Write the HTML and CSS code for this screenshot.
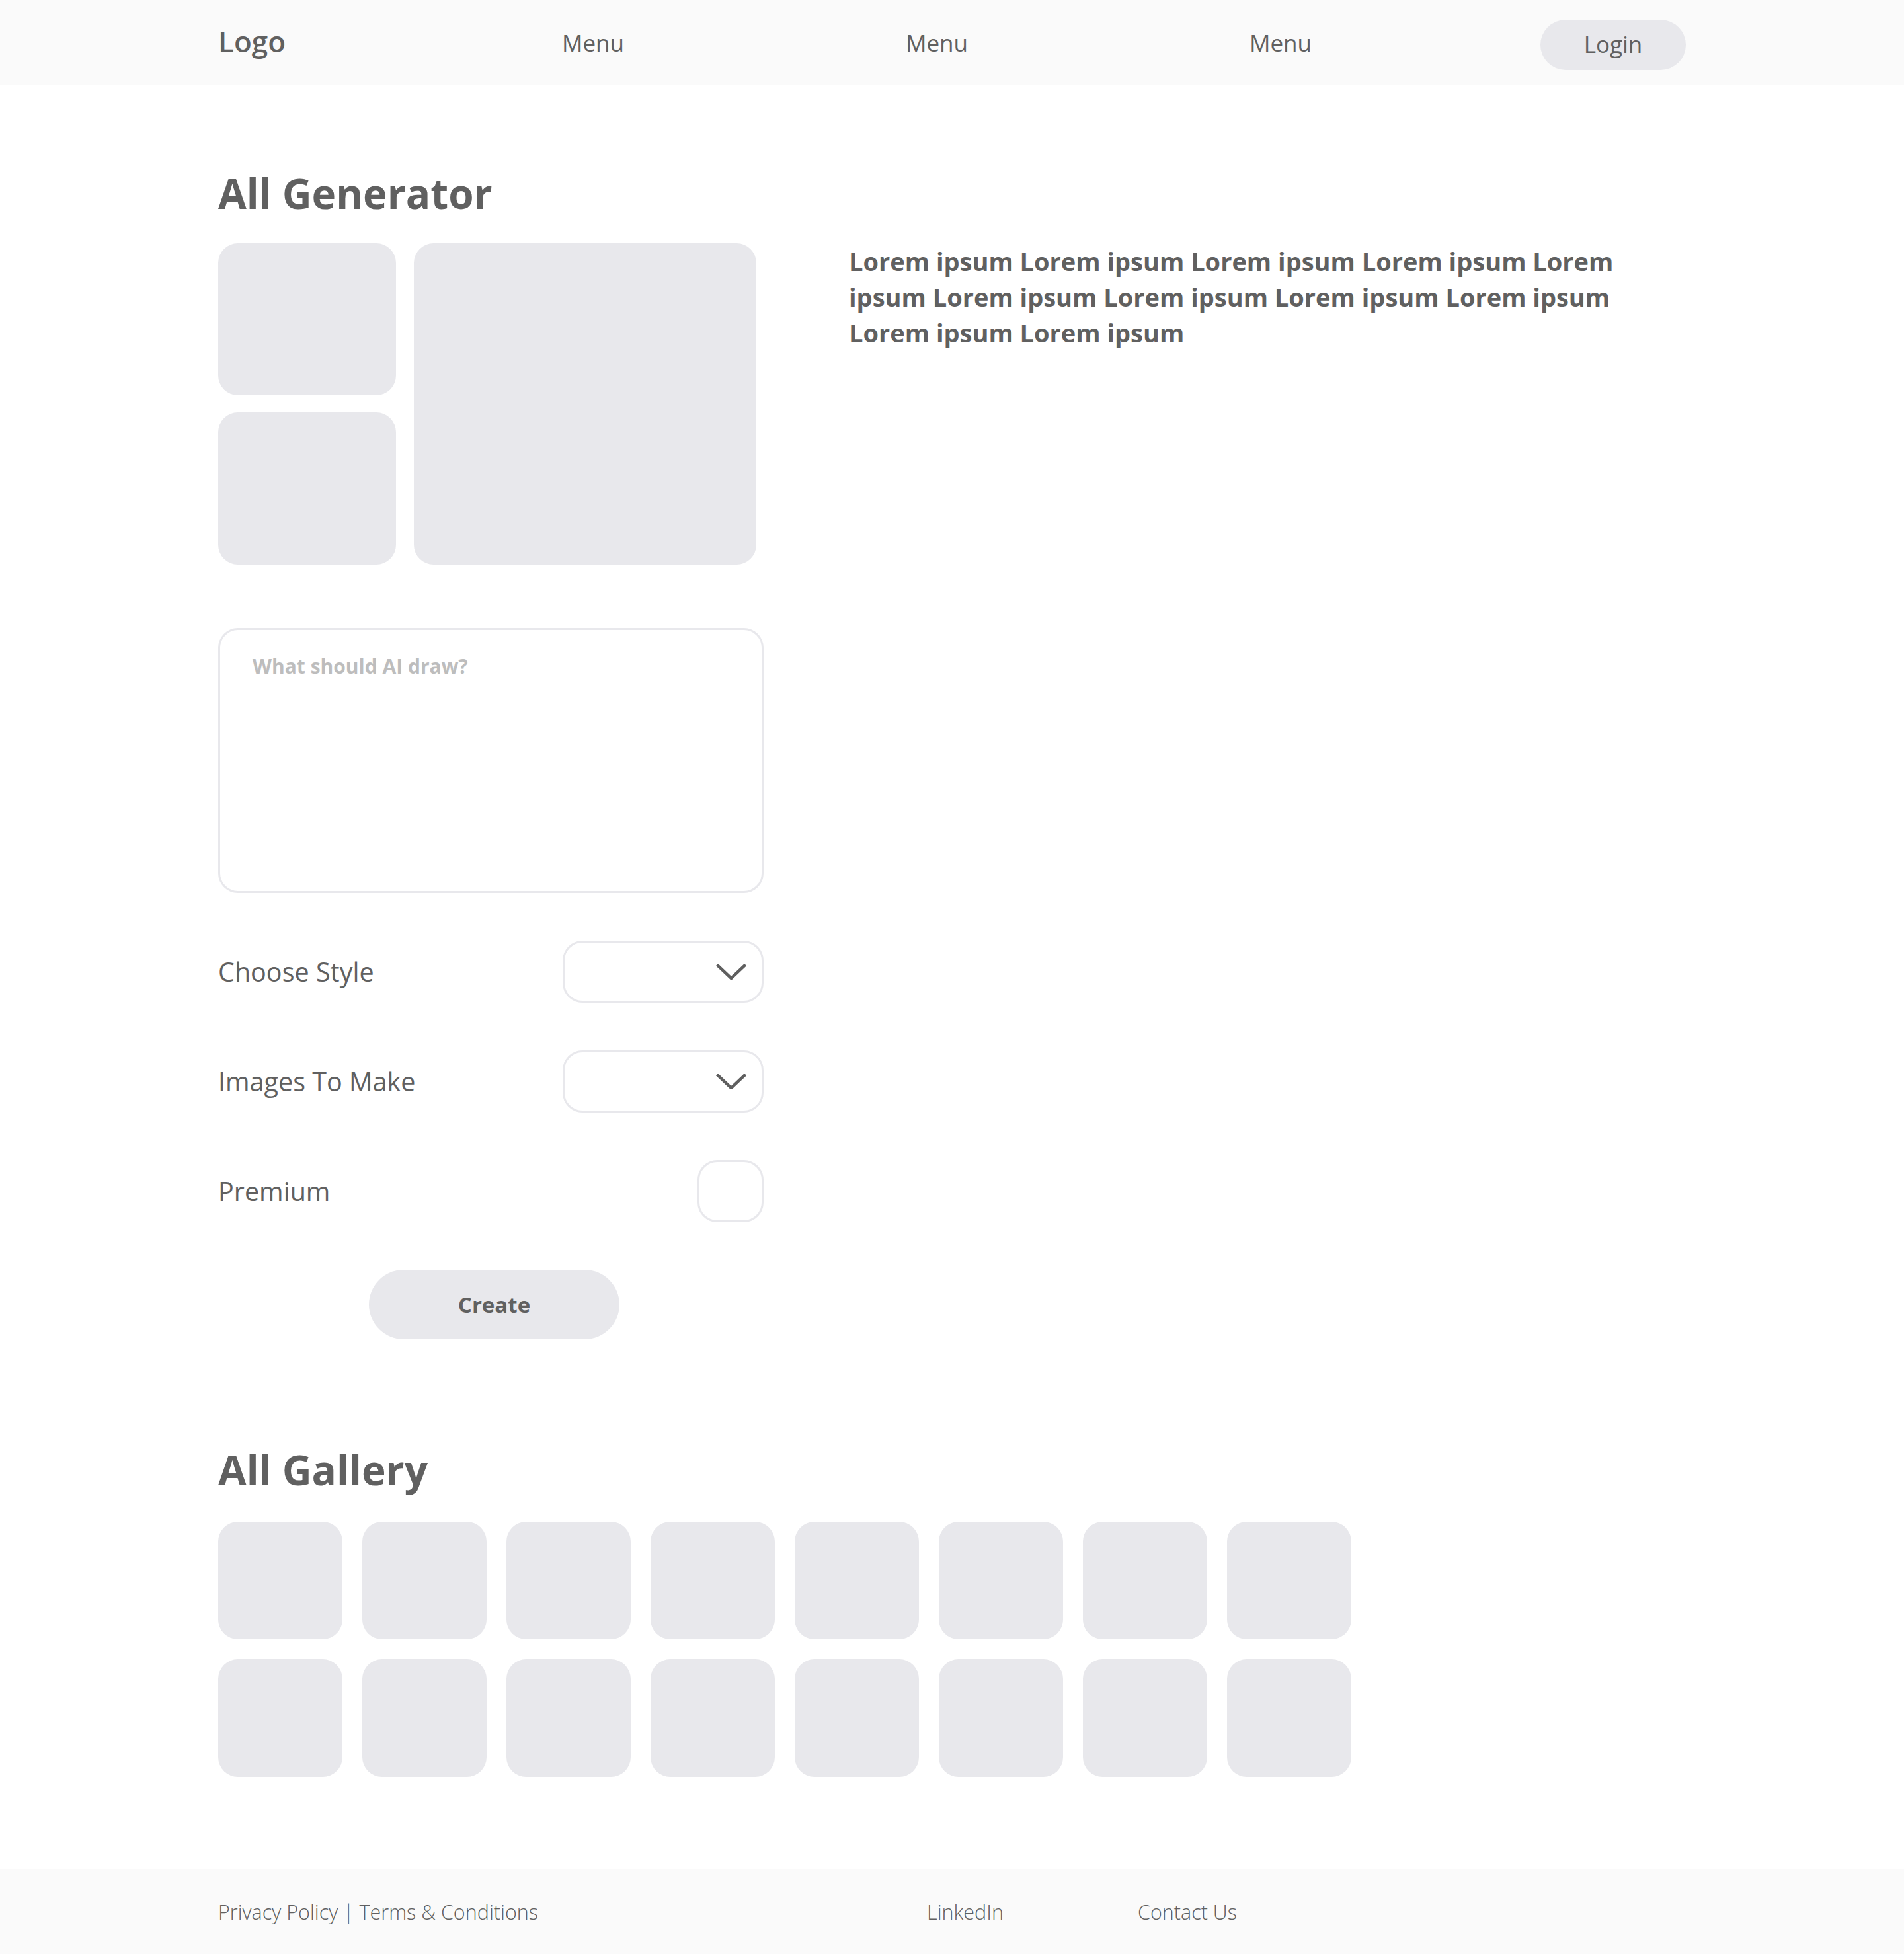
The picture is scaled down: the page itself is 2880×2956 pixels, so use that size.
FILE: index.html
```html
<!DOCTYPE html>
<html lang="en">
<head>
<meta charset="utf-8">
<title>All Generator</title>
<link rel="stylesheet" href="styles.css">
</head>
<body>
<header class="site-header">
  <nav class="container nav">
    <div class="logo">Logo</div>
    <a class="nav-link" href="#">Menu</a>
    <a class="nav-link" href="#">Menu</a>
    <a class="nav-link" href="#">Menu</a>
    <a class="login" href="#">Login</a>
  </nav>
</header>

<main class="container">
  <section class="generator">
    <h1 class="section-title">All Generator</h1>
    <div class="generator-body">
      <div class="generator-form">
        <div class="preview-grid">
          <div class="preview"></div>
          <div class="preview large"></div>
          <div class="preview"></div>
        </div>

        <textarea class="prompt" placeholder="What should AI draw?"></textarea>

        <div class="option-row">
          <span class="option-label">Choose Style</span>
          <div class="select">
            <svg class="chevron" width="46" height="24" viewBox="0 0 46 24" aria-hidden="true"><path d="M1.5 1.5 L23 22 L44.5 1.5" fill="none" stroke="#5f5f5f" stroke-width="4.5"/></svg>
          </div>
        </div>
        <div class="option-row">
          <span class="option-label">Images To Make</span>
          <div class="select">
            <svg class="chevron" width="46" height="24" viewBox="0 0 46 24" aria-hidden="true"><path d="M1.5 1.5 L23 22 L44.5 1.5" fill="none" stroke="#5f5f5f" stroke-width="4.5"/></svg>
          </div>
        </div>
        <div class="option-row">
          <span class="option-label">Premium</span>
          <div class="checkbox"></div>
        </div>

        <button class="create" type="button">Create</button>
      </div>

      <p class="description">Lorem ipsum Lorem ipsum Lorem ipsum Lorem ipsum Lorem ipsum Lorem ipsum Lorem ipsum Lorem ipsum Lorem ipsum Lorem ipsum Lorem ipsum</p>
    </div>
  </section>

  <section class="gallery">
    <h2 class="section-title">All Gallery</h2>
    <div class="gallery-grid">
      <div class="tile"></div><div class="tile"></div><div class="tile"></div><div class="tile"></div>
      <div class="tile"></div><div class="tile"></div><div class="tile"></div><div class="tile"></div>
      <div class="tile"></div><div class="tile"></div><div class="tile"></div><div class="tile"></div>
      <div class="tile"></div><div class="tile"></div><div class="tile"></div><div class="tile"></div>
    </div>
  </section>
</main>

<footer class="site-footer">
  <div class="container footer-inner">
    <span>Privacy Policy | Terms &amp; Conditions</span>
    <a href="#">LinkedIn</a>
    <a href="#">Contact Us</a>
  </div>
</footer>
</body>
</html>
```

FILE: styles.css
```css
body {
  margin: 0;
  font-family: "Open Sans", "Noto Sans", sans-serif;
  color: #606060;
  background: #ffffff;
}

a {
  color: inherit;
  text-decoration: none;
}

.container {
  width: 2220px;
  margin: 0 auto;
}

/* Top bar */
.site-header {
  background: #fafafa;
}

.nav {
  height: 128px;
  display: grid;
  grid-template-columns: 307px repeat(3, 520px) 1fr;
  align-items: center;
}

.logo {
  font-size: 44px;
  font-weight: 600;
  margin-bottom: 4px;
}

.nav-link {
  font-size: 35px;
  font-weight: 500;
  text-align: center;
}

.login {
  justify-self: end;
  box-sizing: border-box;
  width: 220px;
  height: 76px;
  margin-top: 8px;
  padding-bottom: 4px;
  border-radius: 38px;
  background: #e8e8ec;
  font-size: 35px;
  font-weight: 500;
  display: flex;
  align-items: center;
  justify-content: center;
}

/* Headings */
.section-title {
  margin: 0;
  font-size: 62px;
  font-weight: 700;
  line-height: 76px;
}

/* Generator */
.generator {
  padding-top: 126px;
}

.generator-body {
  display: flex;
  gap: 129px;
  margin-top: 38px;
}

.generator-form {
  width: 825px;
  flex: none;
}

.preview-grid {
  display: grid;
  grid-template-columns: 269px 518px;
  grid-template-rows: 230px 230px;
  gap: 26px 27px;
}

.preview {
  background: #e8e8ec;
  border-radius: 30px;
}

.preview.large {
  grid-column: 2;
  grid-row: 1 / 3;
}

.prompt {
  display: block;
  box-sizing: border-box;
  width: 825px;
  height: 401px;
  margin: 96px 0 0;
  padding: 35px 49px;
  border: 3px solid #e8e8ec;
  border-radius: 30px;
  font-family: "Open Sans", "Noto Sans", sans-serif;
  font-size: 30px;
  font-weight: 700;
  line-height: 40px;
  color: #606060;
  resize: none;
  outline: none;
}

.prompt::placeholder {
  color: #bdbdbd;
}

.option-row {
  display: flex;
  justify-content: space-between;
  align-items: center;
  height: 94px;
  margin-top: 72px;
}

.option-label {
  font-size: 39.5px;
}

.select {
  box-sizing: border-box;
  width: 304px;
  height: 94px;
  border: 3px solid #e8e8ec;
  border-radius: 30px;
  display: flex;
  align-items: center;
  justify-content: flex-end;
  padding-right: 23px;
}

.chevron {
  display: block;
}

.checkbox {
  box-sizing: border-box;
  width: 100px;
  height: 94px;
  border: 3px solid #e8e8ec;
  border-radius: 30px;
}

.create {
  display: block;
  width: 379px;
  height: 105px;
  margin: 72px 0 0 228px;
  border: 0;
  border-radius: 53px;
  background: #e8e8ec;
  font-family: "Open Sans", "Noto Sans", sans-serif;
  font-size: 33px;
  font-weight: 700;
  color: #606060;
}

.description {
  margin: 0;
  font-size: 38px;
  font-weight: 700;
  line-height: 54px;
}

/* Gallery */
.gallery {
  margin-top: 159px;
}

.gallery-grid {
  display: grid;
  grid-template-columns: repeat(8, 188px);
  grid-auto-rows: 178px;
  gap: 30px;
  margin-top: 41px;
}

.tile {
  background: #e8e8ec;
  border-radius: 30px;
}

/* Footer */
.site-footer {
  margin-top: 140px;
  background: #fafafa;
}

.footer-inner {
  height: 128px;
  display: grid;
  grid-template-columns: 1072px 319px auto;
  align-items: center;
  font-size: 30.5px;
  font-weight: 300;
}
```
